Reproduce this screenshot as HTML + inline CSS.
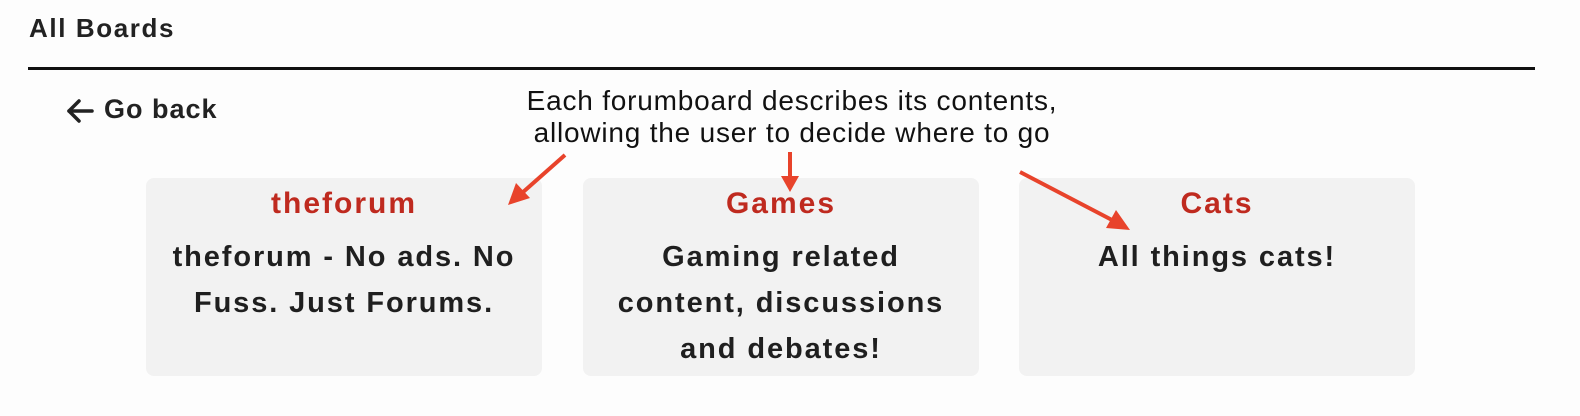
<!DOCTYPE html>
<html><head><style>
body{margin:0;width:1580px;height:416px;background:#fdfdfd;position:relative;overflow:hidden;font-family:"Liberation Sans",sans-serif;color:#1f1f1f}
.h{position:absolute;left:29px;top:13px;font-size:26px;letter-spacing:1.6px;font-weight:bold;color:#222}
.line{position:absolute;left:28px;top:67px;width:1507px;height:3px;background:#111}
.back{position:absolute;left:104px;top:94px;font-size:27px;letter-spacing:1px;font-weight:bold;color:#222}
.note{position:absolute;left:442px;top:85px;width:700px;text-align:center;font-size:28px;letter-spacing:0.8px;line-height:32px;color:#111}
.card{position:absolute;top:178px;width:396px;height:198px;background:#f2f2f2;border-radius:8px;text-align:center}
.card .t{color:#bf2a1f;font-size:30px;letter-spacing:2px;font-weight:bold;margin-top:8px;line-height:36px}
.card .d{font-size:29px;letter-spacing:1.9px;font-weight:bold;line-height:46px;margin-top:12px;color:#1f1f1f;white-space:nowrap}
</style></head><body>
<div class="h">All Boards</div>
<div class="line"></div>
<svg width="30" height="24" style="position:absolute;left:66px;top:99px"><g stroke="#222" stroke-width="3.5" fill="none" stroke-linecap="round" stroke-linejoin="round"><line x1="3" y1="12" x2="26" y2="12"/><polyline points="13,2 3,12 13,22"/></g></svg>
<div class="back">Go back</div>
<div class="card" style="left:146px"><div class="t">theforum</div><div class="d">theforum - No ads. No<br>Fuss. Just Forums.</div></div>
<div class="card" style="left:583px"><div class="t">Games</div><div class="d">Gaming related<br>content, discussions<br>and debates!</div></div>
<div class="card" style="left:1019px"><div class="t">Cats</div><div class="d">All things cats!</div></div>
<div class="note">Each forumboard describes its contents,<br>allowing the user to decide where to go</div>
<svg width="1580" height="416" style="position:absolute;left:0;top:0">
<g stroke="#e8432b" stroke-width="4" fill="#e8432b">
<line x1="565" y1="155" x2="522" y2="193"/>
<polygon points="508,205 516,183 530,198" stroke="none"/>
<line x1="790" y1="152" x2="790" y2="178"/>
<polygon points="781,176 799,176 790,192" stroke="none"/>
<line x1="1020" y1="172" x2="1112" y2="220"/>
<polygon points="1130,230 1106,228 1116,210" stroke="none"/>
</g></svg>
</body></html>
